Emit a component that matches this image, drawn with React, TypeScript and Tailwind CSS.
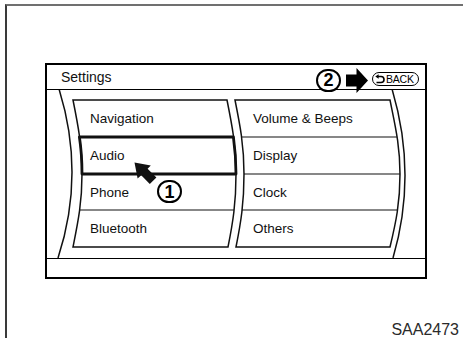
import React from 'react';

const leftItems = ['Navigation', 'Audio', 'Phone', 'Bluetooth'];
const rightItems = ['Volume & Beeps', 'Display', 'Clock', 'Others'];

const ListOutlines: React.FC = () => (
  <svg
    className="absolute inset-0"
    width={378}
    height={168}
    viewBox="47 90 378 168"
    fill="none"
    stroke="#111"
  >
    {/* outer drum arcs */}
    <path d="M59 89 Q85.5 174 58 258" strokeWidth={1.5} />
    <path d="M392 89 Q417.5 174 393 258" strokeWidth={1.5} />

    {/* left column */}
    <path
      d="M73 100 L227 100 C232 125 236 145 236 174 C236 203 233 222 228 247 L73 247 C78 222 82 203 82 174 C82 145 78 125 73 100 Z"
      strokeWidth={1.5}
    />
    <path d="M79.8 210 L233.9 210" strokeWidth={1.2} />

    {/* right column */}
    <path
      d="M235 100 L390 100 C395 125 400 145 400 174 C400 203 396 222 390 247 L236 247 C241 222 244 203 244 174 C244 145 240 125 235 100 Z"
      strokeWidth={1.5}
    />
    <path d="M241.4 137 L396.9 137" strokeWidth={1.2} />
    <path d="M244 174 L400 174" strokeWidth={1.2} />
    <path d="M241.9 210 L397.2 210" strokeWidth={1.2} />

    {/* selected row: Audio */}
    <path
      d="M79.4 137 L233.4 137 C235.2 150 236 160 236 174 L82 174 C82 160 81.4 150 79.4 137 Z"
      strokeWidth={2.8}
      strokeLinejoin="round"
    />

    {/* pointer arrow 1 */}
    <polygon
      points="134.5,162.5 150.8,165.4 147.6,168.8 156.4,177.4 149.8,184 141.2,175.2 137.6,178.6"
      fill="#111"
      stroke="none"
    />
  </svg>
);

const Circled: React.FC<{ n: string; className?: string }> = ({ n, className = '' }) => (
  <div
    className={`flex h-[23px] w-[25px] items-center justify-center rounded-full border-2 border-black bg-white text-[18px] font-bold leading-none text-black ${className}`}
  >
    {n}
  </div>
);

const BackButton: React.FC = () => (
  <div className="flex h-[14px] w-[47px] items-center gap-[1px] rounded-full border-[1.5px] border-black pl-[2px]">
    <svg width={10} height={10} viewBox="0 0 10 10" fill="none">
      <path d="M3 2.5 H6 A3 3 0 0 1 6 8.5 H1.5" stroke="#000" strokeWidth={1.6} />
      <path d="M0.3 2.5 L3.6 0.2 L3.6 4.8 Z" fill="#000" />
    </svg>
    <span className="text-[10.5px] leading-none tracking-[-0.2px] text-black">BACK</span>
  </div>
);

export default function App() {
  return (
    <div
      className="h-[338px] w-[463px] overflow-hidden bg-white"
      style={{ fontFamily: '"Liberation Sans", Arial, sans-serif' }}
    >
      <div className="ml-[5px] mt-[4px] flex h-[334px] flex-col border-l-2 border-t-2 border-l-[#3a3a3a] border-t-[#707070]">
        <div className="ml-[38px] mt-[57px] flex h-[216px] w-[382px] flex-col border-2 border-black">
          {/* header */}
          <div className="flex h-[25px] flex-none items-center justify-between border-b border-black pl-[14px] pr-[6px]">
            <span className="text-[14px] text-[#111]">Settings</span>
            <div className="flex translate-y-[3px] items-center">
              <Circled n="2" />
              <svg className="ml-[5px]" width={22} height={25} viewBox="0 0 22 25">
                <polygon points="0,6.5 10.5,6.5 10.5,0 22,12.5 10.5,25 10.5,18.5 0,18.5" fill="#000" />
              </svg>
              <div className="ml-[4px] -translate-y-[1px]">
                <BackButton />
              </div>
            </div>
          </div>

          {/* list body */}
          <div className="relative h-[168px] flex-none">
            <ListOutlines />
            <div className="relative grid grid-cols-[163px_1fr] grid-rows-[37px_37px_36px_37px] pl-[43px] pt-[11px] text-[13.5px] text-[#111]">
              {leftItems.map((item, i) => (
                <React.Fragment key={item}>
                  <div className="flex items-center">{item}</div>
                  <div className="flex items-center">{rightItems[i]}</div>
                </React.Fragment>
              ))}
            </div>
            <Circled n="1" className="absolute left-[110px] top-[90px]" />
          </div>

          {/* bottom bar */}
          <div className="flex-1 border-t border-black" />
        </div>

        <div className="mt-auto self-end pb-0 pr-[4px] text-[16px] leading-[16px] text-[#2a2a2a]">
          SAA2473
        </div>
      </div>
    </div>
  );
}
